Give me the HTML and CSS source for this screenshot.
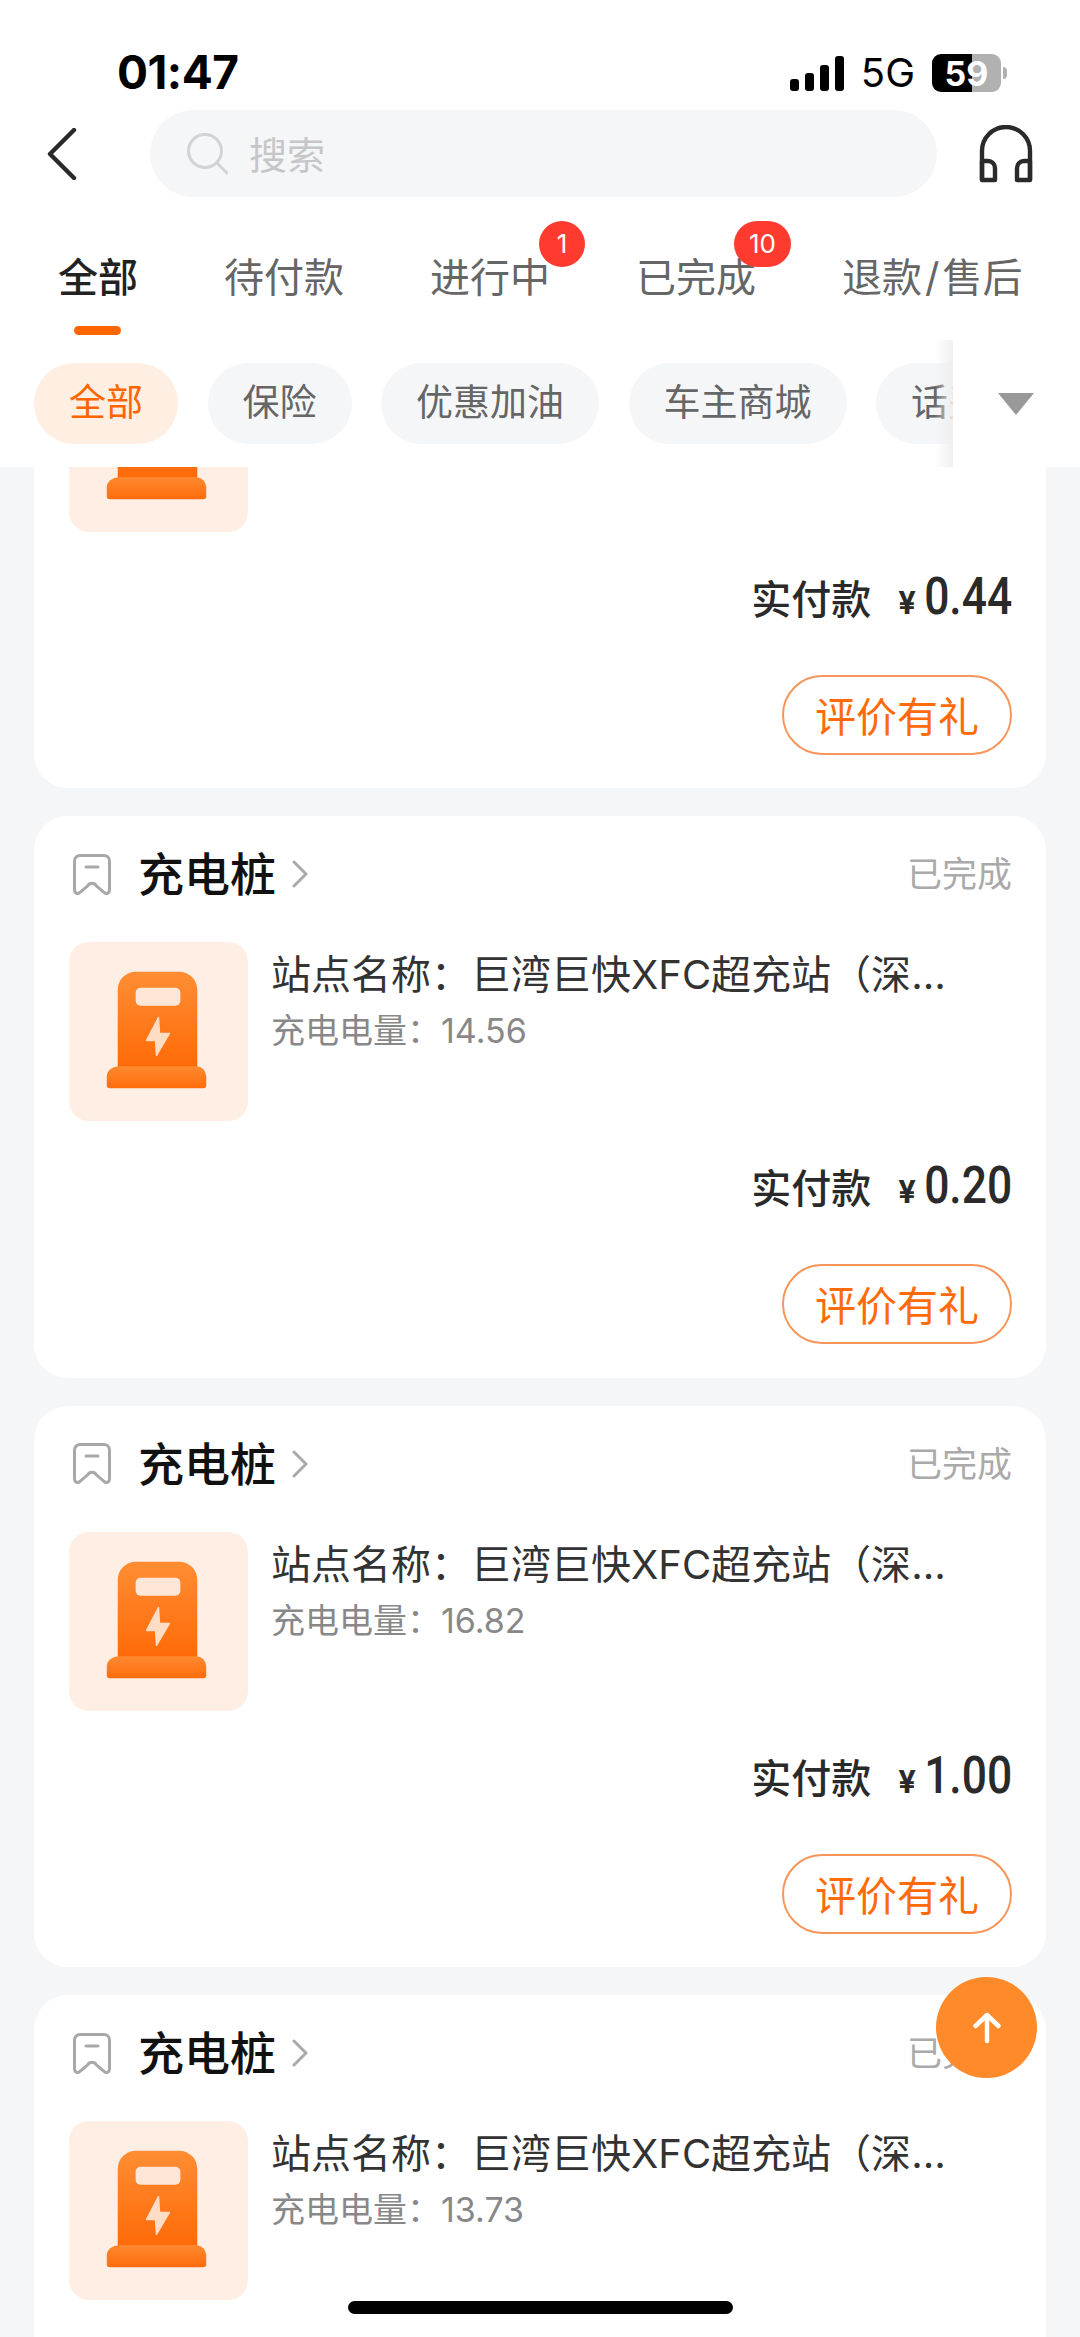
FILE: index.html
```html
<!DOCTYPE html>
<html lang="zh-CN">
<head>
    <meta charset="UTF-8">
    <meta name="viewport" content="width=device-width, initial-scale=1.0">
    <title>订单</title>
    <link rel="stylesheet" href="styles.css">
</head>
<body>
    <svg class="defs" width="0" height="0">
        <defs>
            <linearGradient id="bodyGrad" x1="0" y1="0" x2="0" y2="1">
                <stop offset="0" stop-color="#ff8d33"/>
                <stop offset="1" stop-color="#ff6a08"/>
            </linearGradient>
            <linearGradient id="baseGrad" x1="0" y1="0" x2="0" y2="1">
                <stop offset="0" stop-color="#ff8a30"/>
                <stop offset="1" stop-color="#ff6c0c"/>
            </linearGradient>
            <symbol id="pile" viewBox="0 0 180 180">
                <path d="M49 126V48a18 18 0 0 1 18-18h44a18 18 0 0 1 18 18v78z" fill="url(#bodyGrad)"/>
                <rect x="67" y="46" width="45" height="18" rx="5" fill="#ffe6d6"/>
                <path d="M90 76L78 99h9l1 15 13-22H91z" fill="#ffdcc4" stroke="#ffdcc4" stroke-width="1.500" stroke-linejoin="round"/>
                <path d="M50 125h78a10 10 0 0 1 10 10v9a3 3 0 0 1-3 3H41a3 3 0 0 1-3-3v-9a12 10 0 0 1 12-10z" fill="url(#baseGrad)"/>
            </symbol>
            <symbol id="ticket" viewBox="0 0 38 41">
                <path d="M7 1.500h24a5.500 5.500 0 0 1 5.500 5.500v29c0 3-3 4.500-5.200 2.600l-8-6.800a5 5 0 0 0-8.600 0l-8 6.800C4.500 40.500 1.500 39 1.500 36V7A5.500 5.500 0 0 1 7 1.500z" fill="none" stroke="#a8a8a8" stroke-width="3"/>
                <path d="M13 13h12" fill="none" stroke="#a8a8a8" stroke-width="3" stroke-linecap="round"/>
            </symbol>
        </defs>
    </svg>

    <div class="phone">
        <header class="top">
            <div class="status-bar">
                <span class="clock">01:47</span>
                <div class="status-right">
                    <div class="signal">
                        <i class="bar bar-1"></i>
                        <i class="bar bar-2"></i>
                        <i class="bar bar-3"></i>
                        <i class="bar bar-4"></i>
                    </div>
                    <span class="net">5G</span>
                    <div class="battery"><span>59</span></div>
                    <i class="battery-tip"></i>
                </div>
            </div>

            <div class="search-row">
                <svg class="back" width="30" height="52" viewBox="0 0 30 52">
                    <path d="M27 2L3 26l24 24" fill="none" stroke="#2a2a2a" stroke-width="4.400" stroke-linecap="round" stroke-linejoin="round"/>
                </svg>
                <div class="search">
                    <svg width="42" height="42" viewBox="0 0 42 42">
                        <circle cx="19" cy="18" r="16.500" fill="none" stroke="#d2d3d4" stroke-width="3"/>
                        <path d="M31 30l10 10" fill="none" stroke="#d2d3d4" stroke-width="3" stroke-linecap="round"/>
                    </svg>
                    <span>搜索</span>
                </div>
                <svg class="service" width="54" height="58" viewBox="0 0 54 58">
                    <path d="M3 55V26a24 24 0 0 1 48 0v29" fill="none" stroke="#2a2a2a" stroke-width="4.400"/>
                    <path d="M3 36h6a7 7 0 0 1 7 7v12H3zM51 36h-6a7 7 0 0 0-7 7v12h13z" fill="none" stroke="#2a2a2a" stroke-width="4.400" stroke-linejoin="round"/>
                </svg>
            </div>

            <nav class="tabs">
                <div class="tab active">全部</div>
                <div class="tab">待付款</div>
                <div class="tab">进行中<span class="badge badge-one">1</span></div>
                <div class="tab">已完成<span class="badge badge-ten">10</span></div>
                <div class="tab">退款<span class="slash">/</span>售后</div>
            </nav>

            <div class="filters">
                <span class="pill active">全部</span>
                <span class="pill">保险</span>
                <span class="pill">优惠加油</span>
                <span class="pill">车主商城</span>
                <span class="pill">话费充值</span>
                <div class="filters-more">
                    <i class="triangle"></i>
                </div>
            </div>
        </header>

        <main class="list">
            <div class="list-inner">
                <section class="card">
                    <div class="card-head">
                        <svg class="ticket" width="38" height="41"><use href="#ticket"/></svg>
                        <span class="card-title">充电桩</span>
                        <svg class="more" width="18" height="28" viewBox="0 0 18 28"><path d="M3 2l12 12L3 26" fill="none" stroke="#aaa" stroke-width="3" stroke-linecap="round" stroke-linejoin="round"/></svg>
                        <span class="card-state">已完成</span>
                    </div>
                    <div class="card-body">
                        <div class="thumb"><svg width="179" height="179"><use href="#pile"/></svg></div>
                        <div class="info">
                            <div class="info-name">站点名称：巨湾巨快XFC超充站（深圳宝安店）</div>
                            <div class="info-sub">充电电量：</div>
                        </div>
                    </div>
                    <div class="price"><span class="price-label">实付款</span><span class="yen">¥</span><span class="amount">0.44</span></div>
                    <div class="actions"><span class="btn">评价有礼</span></div>
                </section>

                <section class="card">
                    <div class="card-head">
                        <svg class="ticket" width="38" height="41"><use href="#ticket"/></svg>
                        <span class="card-title">充电桩</span>
                        <svg class="more" width="18" height="28" viewBox="0 0 18 28"><path d="M3 2l12 12L3 26" fill="none" stroke="#aaa" stroke-width="3" stroke-linecap="round" stroke-linejoin="round"/></svg>
                        <span class="card-state">已完成</span>
                    </div>
                    <div class="card-body">
                        <div class="thumb"><svg width="179" height="179"><use href="#pile"/></svg></div>
                        <div class="info">
                            <div class="info-name">站点名称：巨湾巨快XFC超充站（深圳宝安店）</div>
                            <div class="info-sub">充电电量：14.56</div>
                        </div>
                    </div>
                    <div class="price"><span class="price-label">实付款</span><span class="yen">¥</span><span class="amount">0.20</span></div>
                    <div class="actions"><span class="btn">评价有礼</span></div>
                </section>

                <section class="card">
                    <div class="card-head">
                        <svg class="ticket" width="38" height="41"><use href="#ticket"/></svg>
                        <span class="card-title">充电桩</span>
                        <svg class="more" width="18" height="28" viewBox="0 0 18 28"><path d="M3 2l12 12L3 26" fill="none" stroke="#aaa" stroke-width="3" stroke-linecap="round" stroke-linejoin="round"/></svg>
                        <span class="card-state">已完成</span>
                    </div>
                    <div class="card-body">
                        <div class="thumb"><svg width="179" height="179"><use href="#pile"/></svg></div>
                        <div class="info">
                            <div class="info-name">站点名称：巨湾巨快XFC超充站（深圳宝安店）</div>
                            <div class="info-sub">充电电量：16.82</div>
                        </div>
                    </div>
                    <div class="price"><span class="price-label">实付款</span><span class="yen">¥</span><span class="amount">1.00</span></div>
                    <div class="actions"><span class="btn">评价有礼</span></div>
                </section>

                <section class="card">
                    <div class="card-head">
                        <svg class="ticket" width="38" height="41"><use href="#ticket"/></svg>
                        <span class="card-title">充电桩</span>
                        <svg class="more" width="18" height="28" viewBox="0 0 18 28"><path d="M3 2l12 12L3 26" fill="none" stroke="#aaa" stroke-width="3" stroke-linecap="round" stroke-linejoin="round"/></svg>
                        <span class="card-state">已完成</span>
                    </div>
                    <div class="card-body">
                        <div class="thumb"><svg width="179" height="179"><use href="#pile"/></svg></div>
                        <div class="info">
                            <div class="info-name">站点名称：巨湾巨快XFC超充站（深圳宝安店）</div>
                            <div class="info-sub">充电电量：13.73</div>
                        </div>
                    </div>
                </section>
            </div>
        </main>

        <div class="to-top">
            <svg width="30" height="34" viewBox="0 0 30 34">
                <path d="M15 30V5M3.500 15L15 4l11.500 11" fill="none" stroke="#fff" stroke-width="4.500" stroke-linecap="round" stroke-linejoin="round"/>
            </svg>
        </div>
        <div class="home-bar"></div>
    </div>
</body>
</html>
```

FILE: styles.css
```css
* {
    box-sizing: border-box;
}
body {
    margin: 0;
    font-family: Inter, "Noto Sans CJK SC", sans-serif;
    background-color: #f5f6f8;
}
.defs {
    display: block;
    height: 0;
}
.phone {
    position: relative;
    width: 1080px;
    height: 2337px;
    overflow: hidden;
    background-color: #f5f6f8;
}

/* top area */
.top {
    position: relative;
    z-index: 2;
    height: 467px;
    background-color: #fff;
}
.status-bar {
    display: flex;
    justify-content: space-between;
    align-items: center;
    height: 110px;
    padding: 0 73px 0 117px;
}
.clock {
    font-size: 46px;
    font-weight: 700;
    line-height: 54px;
    letter-spacing: -0.5px;
    color: #000;
    margin-top: 34px;
}
.status-right {
    display: flex;
    align-items: center;
    margin-top: 36px;
}
.signal {
    display: flex;
    align-items: flex-end;
    gap: 6px;
    height: 35px;
}
.bar {
    display: block;
    width: 9px;
    border-radius: 3px;
    background-color: #000;
}
.bar-1 { height: 12px; }
.bar-2 { height: 18px; }
.bar-3 { height: 26px; }
.bar-4 { height: 35px; }
.net {
    margin-left: 17px;
    font-size: 40px;
    line-height: 44px;
    font-weight: 400;
    color: #000;
}
.battery {
    display: flex;
    align-items: center;
    justify-content: center;
    width: 69px;
    height: 38px;
    margin-left: 17px;
    border-radius: 9px;
    background: linear-gradient(to right, #000 58%, #b1b1b1 58%);
    color: #fff;
    font-size: 34px;
    font-weight: 700;
}
.battery-tip {
    display: block;
    width: 4px;
    height: 12px;
    margin-left: 2px;
    border-radius: 0 4px 4px 0;
    background-color: #b1b1b1;
}
.search-row {
    display: flex;
    align-items: center;
    height: 87px;
    padding-left: 47px;
}
.back {
    flex: none;
}
.search {
    display: flex;
    align-items: center;
    gap: 21px;
    width: 787px;
    height: 87px;
    margin-left: 73px;
    padding-left: 36px;
    border-radius: 44px;
    background-color: #f5f6f8;
    color: #c5c6c8;
    font-size: 38px;
}
.search span {
    margin-top: -3px;
}
.service {
    flex: none;
    margin-left: 42px;
}
.tabs {
    display: flex;
    gap: 86px;
    margin-top: 61px;
    padding-left: 58px;
}
.tab {
    position: relative;
    height: 77px;
    font-size: 40px;
    line-height: 40px;
    color: #666;
    white-space: nowrap;
}
.tab.active {
    color: #222;
    font-weight: 500;
}
.tab.active::after {
    content: "";
    position: absolute;
    left: 16px;
    bottom: 0;
    width: 47px;
    height: 9px;
    border-radius: 5px;
    background-color: #ff6600;
}
.slash {
    margin: 0 3px;
}
.badge {
    position: absolute;
    top: -37px;
    height: 46px;
    border-radius: 23px;
    background-color: #ff3b30;
    color: #fff;
    font-size: 26px;
    line-height: 46px;
    text-align: center;
}
.badge-one {
    left: 109px;
    width: 46px;
}
.badge-ten {
    left: 98px;
    width: 57px;
}
.filters {
    position: relative;
    display: flex;
    gap: 29.5px;
    margin-top: 28px;
    padding-left: 34px;
    height: 104px;
}
.pill {
    flex: none;
    height: 81px;
    padding: 0 35px;
    border-radius: 41px;
    background-color: #f5f6f8;
    color: #666;
    font-size: 37px;
    line-height: 80px;
}
.pill.active {
    background-color: #ffeee2;
    color: #ff6600;
}
.filters-more {
    position: absolute;
    top: 0;
    right: 0;
    bottom: 0;
    width: 127px;
    padding: 30px 0 0 45px;
    background-color: #fff;
}
.filters-more::before {
    content: "";
    position: absolute;
    left: -18px;
    top: -23px;
    bottom: 0;
    width: 18px;
    background: linear-gradient(to right, rgba(240, 240, 240, 0), rgba(238, 238, 238, 0.9));
}
.triangle {
    display: block;
    width: 0;
    height: 0;
    border-left: 18px solid transparent;
    border-right: 18px solid transparent;
    border-top: 22px solid #999;
}

/* order list */
.list {
    height: 1870px;
    overflow: hidden;
}
.list-inner {
    display: flex;
    flex-direction: column;
    gap: 28px;
    margin-top: -240.5px;
    padding: 0 34px;
}
.card {
    flex: none;
    height: 561.5px;
    padding: 0 34px 0 35px;
    border-radius: 34px;
    background-color: #fff;
}
.card-head {
    display: flex;
    align-items: center;
    height: 116px;
}
.ticket {
    flex: none;
    margin-left: 4px;
}
.card-title {
    margin-left: 27px;
    padding-bottom: 6px;
    font-size: 46px;
    font-weight: 500;
    color: #111;
}
.more {
    flex: none;
    margin-left: 15px;
}
.card-state {
    margin-left: auto;
    padding-bottom: 5px;
    font-size: 35px;
    color: #aaa;
}
.card-body {
    display: flex;
    margin-top: 10px;
    height: 179px;
}
.thumb {
    flex: none;
    width: 179px;
    height: 179px;
    border-radius: 20px;
    background-color: #ffeee3;
}
.thumb svg {
    display: block;
}
.info {
    width: 684px;
    margin-left: 23px;
    padding-top: 11px;
}
.info-name {
    font-size: 40px;
    line-height: 44px;
    color: #333;
    white-space: nowrap;
    overflow: hidden;
    text-overflow: ellipsis;
}
.info-sub {
    margin-top: 14px;
    font-size: 34px;
    line-height: 40px;
    color: #888;
}
.price {
    display: flex;
    justify-content: flex-end;
    align-items: baseline;
    height: 60px;
    margin-top: 35px;
    color: #2a2a2a;
}
.price-label {
    font-size: 40px;
    font-weight: 500;
}
.yen {
    margin-left: 27px;
    font-size: 31px;
    font-weight: 700;
}
/* digits in the screenshot are narrower than Roboto */
.amount {
    margin-left: -5px;
    font-family: Roboto, sans-serif;
    font-size: 51px;
    font-weight: 500;
    transform: scaleX(0.87);
    transform-origin: right;
}
.actions {
    display: flex;
    justify-content: flex-end;
    margin-top: 48px;
}
.btn {
    width: 230px;
    height: 80px;
    border: 2px solid #f7955b;
    border-radius: 40px;
    color: #ff6a0a;
    font-size: 41px;
    line-height: 80px;
    text-align: center;
}

/* floating bits */
.to-top {
    position: absolute;
    z-index: 3;
    left: 936px;
    top: 1977px;
    display: flex;
    align-items: center;
    justify-content: center;
    width: 101px;
    height: 101px;
    border-radius: 50%;
    background-color: #ff8a2a;
}
.home-bar {
    position: absolute;
    z-index: 3;
    left: 348px;
    bottom: 23px;
    width: 385px;
    height: 13px;
    border-radius: 7px;
    background-color: #000;
}
```
